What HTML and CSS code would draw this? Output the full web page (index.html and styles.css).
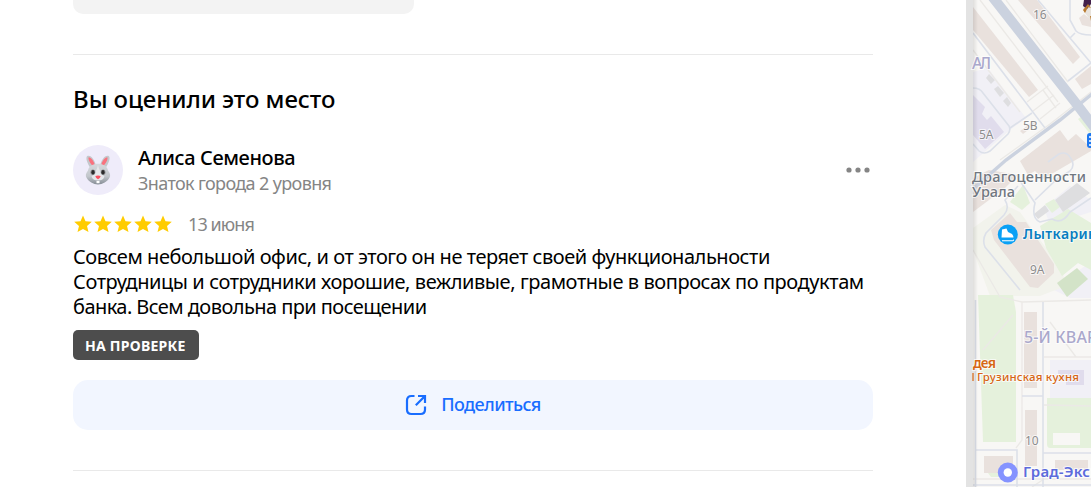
FILE: index.html
```html
<!DOCTYPE html>
<html lang="ru">
<head>
    <meta charset="UTF-8">
    <meta name="viewport" content="width=device-width, initial-scale=1.0">
    <title>Отзыв о месте</title>
    <link rel="stylesheet" href="styles.css">
</head>
<body>
    <main class="panel">
        <div class="previous-card"></div>

        <section class="my-review">
            <h2 class="title">Вы оценили это место</h2>

            <div class="author">
                <div class="avatar">
                    <svg width="30" height="32" viewBox="0 0 30 32">
                        <defs>
                            <linearGradient id="fur" x1="0" y1="0" x2="0" y2="1">
                                <stop offset="0" stop-color="#d6d9dd"/>
                                <stop offset="0.6" stop-color="#c3c7cc"/>
                                <stop offset="1" stop-color="#858c95"/>
                            </linearGradient>
                        </defs>
                        <path d="M8 15C4 9 2.500 4 4 2.200C7.500.2 12 6 13 12zM22 15C26 9 27.500 4 26 2.200C22.500.2 18 6 17 12z" fill="#c4c8cd"/>
                        <path d="M9.200 11.500C6.200 8 5 4.800 5.600 3.200C8.200 3.200 11 7 11.800 11.300zM20.800 11.500C23.800 8 25 4.800 24.400 3.200C21.800 3.200 19 7 18.200 11.300z" fill="#f9727e"/>
                        <path d="M15 9.800C20 9.800 24 12 25 16.500C27 19 28 21.500 26.300 24C24.500 27.500 19.500 30.500 15 30.500S5.500 27.500 3.700 24C2 21.500 3 19 5 16.500C6 12 10 9.800 15 9.800z" fill="url(#fur)"/>
                        <path d="M15 11C16 15 18 20 21.500 22.500C20.500 25.500 18 26.500 15 26.500S9.500 25.500 8.500 22.500C12 20 14 15 15 11z" fill="#e6e8eb"/>
                        <ellipse cx="9.900" cy="18.300" rx="2.400" ry="2.700" fill="#8f8f92"/>
                        <ellipse cx="20.100" cy="18.300" rx="2.400" ry="2.700" fill="#8f8f92"/>
                        <ellipse cx="10" cy="18.300" rx="1.600" ry="2.200" fill="#2b2b2b"/>
                        <ellipse cx="20" cy="18.300" rx="1.600" ry="2.200" fill="#2b2b2b"/>
                        <path d="M12.300 22Q15 21 17.700 22Q17.200 24.200 15 25.200Q12.800 24.200 12.300 22z" fill="#fa5262"/>
                        <path d="M13.500 27h3v2.200h-3z" fill="#fff"/>
                    </svg>
                </div>
                <div class="author-info">
                    <div class="author-name">Алиса Семенова</div>
                    <div class="author-level">Знаток города 2 уровня</div>
                </div>
                <svg class="more" width="24" height="6" viewBox="0 0 24 6" fill="#858585">
                    <circle cx="3" cy="3" r="2.600"/>
                    <circle cx="12" cy="3" r="2.600"/>
                    <circle cx="21" cy="3" r="2.600"/>
                </svg>
            </div>

            <div class="rating">
                <svg width="100" height="20" viewBox="0 0 100 20" fill="#fc0">
                    <defs>
                        <path id="star" d="M10 1.400L12.500 7.200L18.800 7.800L14 12L15.500 18L10 14.900L4.500 18L6 12L1.200 7.800L7.500 7.200z"/>
                    </defs>
                    <use href="#star"/>
                    <use href="#star" x="20"/>
                    <use href="#star" x="40"/>
                    <use href="#star" x="60"/>
                    <use href="#star" x="80"/>
                </svg>
                <span class="date">13 июня</span>
            </div>

            <p class="text">
                <span class="line line-1">Совсем небольшой офис, и от этого он не теряет своей функциональности</span>
                <span class="line line-2">Сотрудницы и сотрудники хорошие, вежливые, грамотные в вопросах по продуктам</span>
                <span class="line line-3">банка. Всем довольна при посещении</span>
            </p>

            <span class="badge">НА ПРОВЕРКЕ</span>

            <button class="share">
                <svg width="22" height="22" viewBox="0 0 22 22" fill="none" stroke="#196dff" stroke-width="2.200">
                    <path d="M9.500 2H6.500Q2 2 2 6.500V15.500Q2 20 6.500 20H15.500Q20 20 20 15.500V12.500"/>
                    <path d="M10.800 11.200L19.500 2.500M13 2H20V9"/>
                </svg>
                <span class="share-label">Поделиться</span>
            </button>
        </section>
    </main>

    <aside class="map">
        <svg width="125" height="487" viewBox="966 0 125 487">
            <defs>
                <linearGradient id="edge" x1="0" x2="1">
                    <stop offset="0" stop-color="#000" stop-opacity="0.100"/>
                    <stop offset="1" stop-color="#000" stop-opacity="0"/>
                </linearGradient>
            </defs>
            <rect x="966" width="125" height="487" fill="#f8f7f5"/>

            <!-- land -->
            <g fill="#f1f0f6">
                <path d="M973 72L988 68L1026 118L1010 130L973 162z"/>
                <path d="M1050 360H1091V398H1050zM1052 289L1091 262V298L1070 298zM1044 208L1070 186L1091 200V212L1050 225z"/>
            </g>
            <path d="M973 228L1005 205L1020 212L1062 270L1066 286L1040 296H990L973 250z" fill="#f2f3ec"/>
            <g fill="#e5f1dc">
                <path d="M1010 202L1023 185L1030 203L1022 210z"/>
                <path d="M1040 226L1068 209L1091 223V270L1078 263L1062 276L1046 248z"/>
                <path d="M1045 204L1054 199L1060 207L1052 213z"/>
                <path d="M978 295H1013L1016 312V442H983z"/>
                <path d="M1047 398H1091V448H1050Q1047 448 1047 444zM988 473H1003V477H991zM1078 119L1081 117L1091 131V135z"/>
            </g>
            <path d="M1053 433H1080V445H1053z" fill="#f8f7f5"/>
            <path d="M1057 283L1077 268L1088 279L1067 297z" fill="#d3e3c8"/>

            <!-- buildings -->
            <g fill="#e9e1dd">
                <path d="M973 7L1038 90L1029 97L973 30z"/>
                <path d="M1018 0H1037L1080 57L1073 64z"/>
                <path d="M1075 79L1091 66V84L1082 89z"/>
                <path d="M1020 161L1060 130L1068 141L1076 134L1091 148V151L1043 179L1035 171L1028 175z"/>
                <path d="M973 178L989 170L1018 175L1005 188L973 212z"/>
                <path d="M1020 131L1034 121L1036 124L1023 134z"/>
                <path d="M991 230L1010 213L1017 222L1026 222L1054 264V273L1038 288L1030 287L994 240z"/>
                <path d="M1024 312H1037V388H1024zM1025 410H1037V466H1025zM984 456H1013V473H984zM1055 460H1088V470H1055z"/>
                <path d="M1079 18L1084 14L1091 20V27L1082 25z"/>
            </g>
            <g fill="#dedee0">
                <path d="M1055 200L1077 183L1090 193L1063 212zM1034 214L1045 205L1049 211L1038 219z"/>
                <path d="M986 78L989 74L995 80L991 84zM994 89L998 86L1004 93L1000 97zM1003 101L1007 97L1011 103L1008 107z"/>
            </g>
            <path d="M973 95L985 107L982 114L987 120L991 116L1004 132L985 149L973 135zM1058 370H1084V385H1066V380H1058z" fill="#e0dcec"/>

            <!-- lanes -->
            <g fill="none" stroke="#ebe9e6" stroke-width="1.300">
                <path d="M980 0L1058 102M1006 0L1068 82M973 50L1020 112M1027 102L1048 86M1033 111L1054 95M1040 119L1060 103M1043 90L1056 108"/>
                <path d="M973 250L1000 297L1022 302L1091 300M1000 160L1050 124L1091 92M1080 107L1091 122M973 479H1091M1050 322L1076 357M1044 357H1091M983 350L1013 315M1044 405L1091 406M1022 302V440L1016 448M1032 487L1044 479"/>
            </g>
            <g fill="none" stroke="#dce0e9" stroke-width="1.600">
                <path d="M973 33L1045 128M1038 0L1091 63M1068 81L1091 63M1070 0V20L1076 31Q1080 35 1091 35M1070 38L1075 33"/>
                <path d="M973 88Q980 88 983 93L1009 126Q1011 130 1008 134L990 151Q984 155 979 151L973 144M1010 128L1032 113"/>
                <path d="M1020 290L985 247Q982 240 986 233L1004 215Q1010 208 1005 200L1018 186"/>
                <path d="M1020 181L1035 203Q1031 218 1040 222L1052 219Q1062 225 1070 212L1091 198M1035 200L1056 180L1070 171Q1076 165 1070 157Q1066 151 1059 154L1048 162"/>
                <path d="M975.500 300V487M976 450H1017V487M1022 396H1043M1043 302V487M1043 453H1091M973 485H1091"/>
            </g>
            <path d="M973 189L1006 160L1060 120L1092 94" fill="none" stroke="#cbd2df" stroke-width="3.500"/>
            <path d="M991 -5L1075 102L1097 131" fill="none" stroke="#cbd2df" stroke-width="10"/>

            <!-- panel edge -->
            <rect x="966" width="7" height="487" fill="#e3e3e3"/>
            <rect x="973" width="5" height="487" fill="url(#edge)"/>

            <!-- labels -->
            <g class="map-label">
                <text x="1033" y="19" class="house">16</text>
                <text x="979" y="139" class="house">5А</text>
                <text x="1023" y="130" class="house">5В</text>
                <text x="1030" y="274" class="house">9А</text>
                <text x="1025" y="445" class="house">10</text>
                <text x="972" y="69" class="district" textLength="19">АЛ</text>
                <text x="1024" y="343" class="district" textLength="82">5-Й КВАРТ</text>
                <text x="972" y="182" class="place" textLength="114">Драгоценности</text>
                <text x="972" y="197" class="place" textLength="43">Урала</text>
                <text x="1023" y="239" class="sport" textLength="83">Лыткарино</text>
                <text x="973" y="368" class="food" textLength="23">дея</text>
                <text x="977" y="381" class="food food-small" textLength="102">Грузинская кухня</text>
                <text x="1023" y="477" class="company" textLength="86">Град-Экспо</text>
            </g>
            <path d="M973 373V381" stroke="#d76614" stroke-width="1.200"/>

            <!-- pins -->
            <circle cx="1007.800" cy="234.500" r="10" fill="#0aa0f5"/>
            <path d="M1002 229.500L1006.500 228.500L1008 232L1012 234Q1013.500 235.500 1013.500 237.500H1001.500zM1002 240.200H1013L1014 239V240.500L1013 241.200H1002z" fill="#fff"/>
            <circle cx="1007.800" cy="472.500" r="10" fill="#8593ff"/>
            <circle cx="1007.800" cy="472.500" r="4.200" fill="#fff"/>
            <rect x="1087" y="133" width="10" height="15" rx="3" fill="#1e78f0"/>
            <path d="M1089 137H1091M1089 141H1091M1089 145H1091" stroke="#fff" stroke-width="1.500"/>
            <path d="M1084 0H1091V21L1085 13L1083 9L1086 4z" fill="#e8e3dc"/>
            <path d="M1084 0H1091V4L1087 9L1083 6z" fill="#42204a"/>
            <path d="M1083 10L1088 4L1091 8L1088 7L1085 13zM1090 16L1091 21V16z" fill="#b97a2e"/>
        </svg>
    </aside>
</body>
</html>
```

FILE: styles.css
```css
body {
    margin: 0;
    display: flex;
    width: 1091px;
    height: 487px;
    overflow: hidden;
    background: #fff;
    color: #000;
    font-family: "Noto Sans", sans-serif;
}
.panel {
    box-sizing: border-box;
    width: 966px;
    padding: 0 93px 0 73px;
}
.previous-card {
    width: 341px;
    height: 14px;
    border-radius: 0 0 10px 10px;
    background: #f3f3f3;
}
.my-review {
    box-sizing: border-box;
    height: 417px;
    margin-top: 40px;
    padding-top: 27px;
    border-top: 1px solid #e9e9e9;
    border-bottom: 1px solid #e9e9e9;
}
.title {
    margin: 0;
    font-size: 24px;
    font-weight: 500;
    line-height: 34px;
    letter-spacing: -0.07px;
}
.author {
    display: flex;
    align-items: center;
    height: 50px;
    margin-top: 29px;
}
.avatar {
    display: flex;
    align-items: center;
    justify-content: center;
    width: 50px;
    height: 50px;
    border-radius: 50%;
    background: #efecfa;
}
.author-info {
    margin-left: 15px;
}
.author-name {
    padding-top: 1px;
    font-size: 20px;
    font-weight: 500;
    line-height: 26px;
    letter-spacing: -0.4px;
}
.author-level {
    color: #858585;
    font-size: 18px;
    line-height: 25px;
    letter-spacing: -0.63px;
}
.more {
    margin-left: auto;
    margin-right: 3px;
}
.rating {
    display: flex;
    align-items: center;
    height: 24px;
    margin-top: 17px;
}
.date {
    margin-left: 15px;
    color: #858585;
    font-size: 18px;
    line-height: 24px;
    letter-spacing: -0.9px;
}
.text {
    margin: 8px 0 0;
    font-size: 20px;
    line-height: 25px;
}
.line {
    display: block;
    white-space: nowrap;
}
.line-1 {
    letter-spacing: -0.45px;
}
.line-2 {
    letter-spacing: -0.42px;
}
.line-3 {
    letter-spacing: -0.56px;
}
.badge {
    display: block;
    box-sizing: border-box;
    width: 126px;
    height: 30px;
    margin-top: 11px;
    padding-left: 12px;
    border-radius: 5px;
    background: #4d4d4d;
    color: #fff;
    font-size: 14px;
    font-weight: 700;
    line-height: 31px;
    letter-spacing: 0.25px;
    white-space: nowrap;
}
.share {
    display: flex;
    align-items: center;
    justify-content: center;
    gap: 14px;
    width: 800px;
    height: 50px;
    margin-top: 20px;
    padding: 0;
    border: none;
    border-radius: 15px;
    background: #f2f6ff;
    color: #196dff;
    font-family: inherit;
    font-size: 18px;
    font-weight: 500;
}
.share-label {
    padding-bottom: 2px;
    letter-spacing: -0.6px;
}
.map {
    width: 125px;
    height: 487px;
}
.map svg {
    display: block;
}
.map-label text {
    paint-order: stroke;
    stroke: #fff;
    stroke-opacity: 0.7;
    stroke-width: 2px;
}
.map-label .house {
    fill: #8c8c8c;
    font-size: 12px;
}
.map-label .district {
    fill: #aaa8cc;
    font-size: 16px;
    font-weight: 500;
}
.map-label .place {
    fill: #707780;
    font-size: 14.5px;
    font-weight: 500;
}
.map-label .sport {
    fill: #087dc1;
    font-size: 14px;
    font-weight: 600;
}
.map-label .food {
    fill: #d76614;
    font-size: 14px;
    font-weight: 600;
}
.map-label .food-small {
    font-size: 11.5px;
    font-weight: 500;
}
.map-label .company {
    fill: #5c6bdc;
    font-size: 15px;
    font-weight: 600;
}
```
